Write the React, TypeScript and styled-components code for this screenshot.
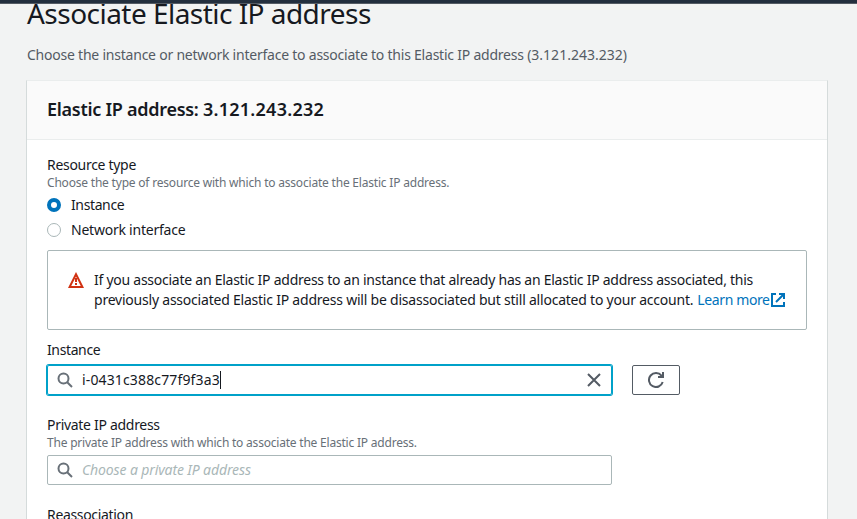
import React from "react";
import styled, { createGlobalStyle } from "styled-components";

const GlobalStyle = createGlobalStyle`
  *, *::before, *::after { box-sizing: border-box; }
  html, body, #root { height: 100%; }
  body {
    margin: 0;
    overflow: hidden;
    background: #f2f3f3;
    color: #16191f;
    font-family: "Noto Sans", sans-serif;
    font-size: 14px;
    line-height: 20px;
  }
  h1, h2, p { margin: 0; }
  svg { flex-shrink: 0; }
`;

const Page = styled.div`
  height: 100vh;
  overflow: hidden;
`;

const TopBar = styled.header`
  position: relative;
  z-index: 1;
  height: 4px;
  background: #232f3e;
  border-bottom: 1px solid #545b64;
`;

const Main = styled.main`
  margin-top: -9px;
  padding: 0 30px 0 27px;
`;

const Title = styled.h1`
  font-size: 28px;
  line-height: 36px;
  font-weight: 400;
`;

const Fit = styled.span<{ $track: number }>`
  letter-spacing: ${(p) => p.$track}px;
  white-space: nowrap;
`;

const Intro = styled.p`
  margin-top: 14px;
  color: #545b64;
`;

const Card = styled.section`
  margin: 15px -1px 0;
  width: 802px;
  height: 600px;
  background: #fff;
  border: 1px solid #d5dbdb;
  border-top-color: #eaeded;
`;

const CardHeader = styled.div`
  height: 59px;
  padding: 17px 20px 0;
  background: #fafafa;
  border-bottom: 1px solid #eaeded;
`;

const CardTitle = styled.h2`
  font-size: 18px;
  line-height: 22px;
  font-weight: 600;
`;

const CardBody = styled.div`
  display: flex;
  flex-direction: column;
  padding: 15px 20px 0;
`;

const Description = styled.p`
  color: #687078;
  font-size: 12px;
  line-height: 16px;
`;

const RadioList = styled.div`
  display: flex;
  flex-direction: column;
  gap: 5px;
  margin-top: 4px;
`;

const RadioRow = styled.label`
  display: flex;
  align-items: center;
  gap: 10px;
  height: 20px;
`;

const RadioDot = styled.span<{ $checked?: boolean }>`
  width: 14px;
  height: 14px;
  border-radius: 50%;
  background: #fff;
  border: ${(p) => (p.$checked ? "4px solid #0073bb" : "1px solid #aab7b8")};
`;

const Alert = styled.div`
  display: flex;
  width: 760px;
  height: 80px;
  margin-top: 10px;
  padding: 19px 20px;
  gap: 10px;
  border: 1px solid #aab7b8;
  border-radius: 2px;

  & > svg { margin-top: 2px; }
`;

const AlertText = styled.div`
  display: flex;
  flex-direction: column;
`;

const AlertLine = styled.div`
  display: flex;
  gap: 4px;
  height: 20px;
`;

const Link = styled.a`
  display: flex;
  align-items: center;
  color: #0073bb;
`;

const Field = styled.div<{ $gap: number }>`
  margin-top: ${(p) => p.$gap}px;
`;

const FieldRow = styled.div<{ $gap: number }>`
  display: flex;
  gap: 20px;
  margin-top: ${(p) => p.$gap}px;
`;

const SearchBox = styled.div<{ $focused?: boolean }>`
  display: flex;
  align-items: center;
  width: 565px;
  height: 30px;
  padding: 0 9px;
  border: 1px solid ${(p) => (p.$focused ? "#00a1c9" : "#aab7b8")};
  border-radius: 2px;
  box-shadow: ${(p) => (p.$focused ? "0 0 0 1px #00a1c9" : "none")};
`;

const SearchText = styled.span`
  margin-left: 9px;
`;

const Placeholder = styled(SearchText)`
  color: #aab7b8;
  font-style: italic;
`;

const Caret = styled.span`
  width: 1px;
  height: 18px;
  background: #16191f;
`;

const ClearButton = styled.span`
  display: flex;
  margin-left: auto;
`;

const RefreshButton = styled.button`
  display: flex;
  align-items: center;
  justify-content: center;
  width: 48px;
  height: 30px;
  padding: 0;
  background: #fff;
  border: 1px solid #545b64;
  border-radius: 2px;
`;

const SearchIcon = () => (
  <svg width="16" height="16" viewBox="0 0 16 16" fill="none" stroke="#687078" strokeWidth="2">
    <circle cx="6.5" cy="6.5" r="5" />
    <path d="M10.2 10.2 15 15" />
  </svg>
);

const WarningIcon = () => (
  <svg width="16" height="16" viewBox="0 0 16 16" fill="none" stroke="#d13212" strokeWidth="2">
    <path d="M8 2.2 14.4 15H1.6Z" />
    <path d="M8 6v4M8 11v2" />
  </svg>
);

const ExternalIcon = () => (
  <svg width="16" height="16" viewBox="0 0 16 16" fill="none" stroke="#0073bb" strokeWidth="2">
    <path d="M6 2H2v12h12v-4" />
    <path d="M9 2h5v5M14 2 6 10" />
  </svg>
);

const CloseIcon = () => (
  <svg width="16" height="16" viewBox="0 0 16 16" fill="none" stroke="#545b64" strokeWidth="2">
    <path d="m2 2 12 12M14 2 2 14" />
  </svg>
);

const RefreshIcon = () => (
  <svg width="16" height="16" viewBox="0 0 16 16" fill="none" stroke="#545b64" strokeWidth="2">
    <path d="M14.7 10A7 7 0 1 1 13.5 3.7L14.5 5" />
    <path d="M10 5h5V0" />
  </svg>
);

export default function App() {
  return (
    <Page>
      <GlobalStyle />
      <TopBar />
      <Main>
        <Title><Fit $track={-0.53}>Associate Elastic IP address</Fit></Title>
        <Intro>
          <Fit $track={-0.225}>
            Choose the instance or network interface to associate to this Elastic IP address{" "}
          </Fit>
          <Fit $track={0}>(3.121.243.232)</Fit>
        </Intro>
        <Card>
          <CardHeader>
            <CardTitle>
              <Fit $track={-0.28}>Elastic IP address: </Fit>
              <Fit $track={0.25}>3.121.243.232</Fit>
            </CardTitle>
          </CardHeader>
          <CardBody>
            <div><Fit $track={-0.3}>Resource type</Fit></div>
            <Description>
              <Fit $track={-0.2}>Choose the type of resource with which to associate the Elastic IP address.</Fit>
            </Description>
            <RadioList>
              <RadioRow><RadioDot $checked /><Fit $track={-0.38}>Instance</Fit></RadioRow>
              <RadioRow><RadioDot /><Fit $track={-0.23}>Network interface</Fit></RadioRow>
            </RadioList>
            <Alert>
              <WarningIcon />
              <AlertText>
                <AlertLine>
                  <Fit $track={-0.255}>
                    If you associate an Elastic IP address to an instance that already has an Elastic IP address associated, this
                  </Fit>
                </AlertLine>
                <AlertLine>
                  <Fit $track={-0.22}>
                    previously associated Elastic IP address will be disassociated but still allocated to your account.
                  </Fit>
                  <Link><Fit $track={-0.38}>Learn more</Fit><ExternalIcon /></Link>
                </AlertLine>
              </AlertText>
            </Alert>
            <Field $gap={10}>
              <div><Fit $track={-0.38}>Instance</Fit></div>
              <FieldRow $gap={5}>
                <SearchBox $focused>
                  <SearchIcon />
                  <SearchText><Fit $track={0.14}>i-0431c388c77f9f3a3</Fit></SearchText>
                  <Caret />
                  <ClearButton><CloseIcon /></ClearButton>
                </SearchBox>
                <RefreshButton aria-label="Refresh"><RefreshIcon /></RefreshButton>
              </FieldRow>
            </Field>
            <Field $gap={20}>
              <div><Fit $track={-0.3}>Private IP address</Fit></div>
              <Description>
                <Fit $track={-0.21}>The private IP address with which to associate the Elastic IP address.</Fit>
              </Description>
              <FieldRow $gap={4}>
                <SearchBox>
                  <SearchIcon />
                  <Placeholder><Fit $track={-0.12}>Choose a private IP address</Fit></Placeholder>
                </SearchBox>
              </FieldRow>
            </Field>
            <Field $gap={20}><Fit $track={-0.33}>Reassociation</Fit></Field>
          </CardBody>
        </Card>
      </Main>
    </Page>
  );
}
